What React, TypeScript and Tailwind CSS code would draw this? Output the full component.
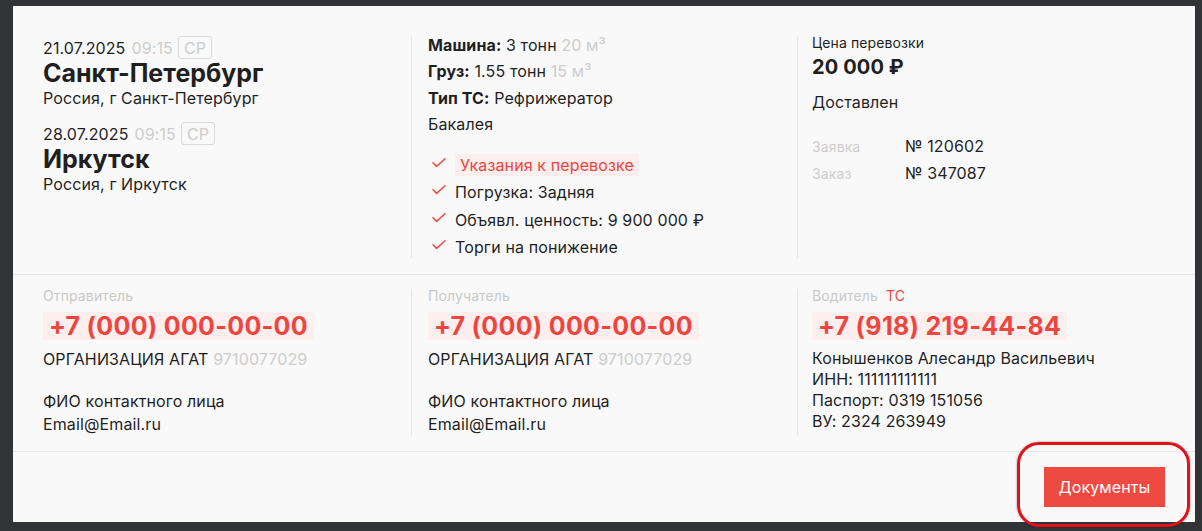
import React from "react";

const Check = () => (
    <svg width="14" height="10" viewBox="0 0 14 10" fill="none">
        <polyline points="1,4.8 4.6,8.4 13,0.8" stroke="#ef4a42" strokeWidth="1.5" strokeLinecap="round" strokeLinejoin="round" />
    </svg>
);

const DateRow = ({ date }: { date: string }) => (
    <div className="flex items-center h-[23px] text-[16px] leading-5">
        <span className="text-[#1f1f1f]">{date}</span>
        <span className="ml-[6px] text-[#cdcdcd]">09:15</span>
        <span className="ml-[5px] h-[23px] px-[5px] flex items-center border border-[#dadada] rounded-[3px] text-[#cdcdcd]">СР</span>
    </div>
);

const Phone = ({ value }: { value: string }) => (
    <div className="self-start mt-[9px] h-[28px] px-[6px] bg-[#fdefed] text-[#ee4540] text-[25px] leading-[28px] font-bold tracking-[0.3px]">
        {value}
    </div>
);

const checks = [
    { text: "Указания к перевозке", accent: true },
    { text: "Погрузка: Задняя" },
    { text: "Объявл. ценность: 9 900 000 ₽" },
    { text: "Торги на понижение" },
];

export default function App() {
    return (
        <div className="relative h-[531px] w-full bg-[#323336] pt-[6px] pl-[13px] font-['Inter','Noto_Sans',sans-serif] text-[#1f1f1f] tracking-[0.12px]">
            <div className="w-[1182px] h-[516px] bg-[#f9f9f9] flex flex-col">
                {/* верх */}
                <div className="flex pl-[30px] pt-[30px] pb-[16px] border-b border-[#e7e7e7]">
                    <div className="w-[368px] flex flex-col">
                        <DateRow date="21.07.2025" />
                        <div className="text-[25px] leading-[28px] font-bold tracking-normal">Санкт-Петербург</div>
                        <div className="text-[16px] leading-[22px]">Россия, г Санкт-Петербург</div>
                        <div className="mt-[13px]">
                            <DateRow date="28.07.2025" />
                        </div>
                        <div className="text-[25px] leading-[28px] font-bold tracking-normal">Иркутск</div>
                        <div className="text-[16px] leading-[22px]">Россия, г Иркутск</div>
                    </div>

                    <div className="w-[386px] border-l border-[#e7e7e7] pl-4 flex flex-col text-[16px]">
                        <div className="-mt-[1px] flex flex-col gap-[6.3px] leading-5">
                            <div><b className="font-bold">Машина:</b> 3 тонн <span className="text-[#cdcdcd]">20 м³</span></div>
                            <div><b className="font-bold">Груз:</b> 1.55 тонн <span className="text-[#cdcdcd]">15 м³</span></div>
                            <div><b className="font-bold">Тип ТС:</b> Рефрижератор</div>
                            <div>Бакалея</div>
                        </div>
                        <div className="mt-[20px] flex flex-col gap-[5.5px]">
                            {checks.map((c) => (
                                <div key={c.text} className="flex items-start h-[22px]">
                                    <div className="w-[27px] pl-[4px] pt-[4px]">
                                        <Check />
                                    </div>
                                    {c.accent ? (
                                        <span className="h-[22px] px-[5px] leading-[22px] bg-[#fdefed] text-[#ee4540]">{c.text}</span>
                                    ) : (
                                        <span className="leading-[22px]">{c.text}</span>
                                    )}
                                </div>
                            ))}
                        </div>
                    </div>

                    <div className="w-[368px] border-l border-[#e7e7e7] pl-[14px] flex flex-col">
                        <div className="text-[14px] leading-[14px]">Цена перевозки</div>
                        <div className="mt-[3px] text-[20px] leading-[28px] font-bold">20 000 ₽</div>
                        <div className="mt-[11px] text-[16px] leading-5">Доставлен</div>
                        <div className="mt-[24px] flex flex-col gap-[5.5px]">
                            <div className="flex items-baseline leading-5">
                                <span className="w-[93px] text-[14px] text-[#cdcdcd]">Заявка</span>
                                <span className="text-[16px]">№ 120602</span>
                            </div>
                            <div className="flex items-baseline leading-5">
                                <span className="w-[93px] text-[14px] text-[#cdcdcd]">Заказ</span>
                                <span className="text-[16px]">№ 347087</span>
                            </div>
                        </div>
                    </div>
                </div>

                {/* контакты */}
                <div className="flex pl-[30px] pt-[14px] pb-[15px] border-b border-[#e7e7e7] text-[16px]">
                    <div className="w-[368px] flex flex-col">
                        <div className="text-[14px] leading-[14px] text-[#c9c9c9]">Отправитель</div>
                        <Phone value="+7 (000) 000-00-00" />
                        <div className="mt-[9px] leading-5">ОРГАНИЗАЦИЯ АГАТ <span className="text-[#cdcdcd]">9710077029</span></div>
                        <div className="mt-[21px] leading-[23px]">ФИО контактного лица</div>
                        <div className="leading-[23px]">Email@Email.ru</div>
                    </div>

                    <div className="w-[386px] border-l border-[#e7e7e7] pl-4 flex flex-col">
                        <div className="text-[14px] leading-[14px] text-[#c9c9c9]">Получатель</div>
                        <Phone value="+7 (000) 000-00-00" />
                        <div className="mt-[9px] leading-5">ОРГАНИЗАЦИЯ АГАТ <span className="text-[#cdcdcd]">9710077029</span></div>
                        <div className="mt-[21px] leading-[23px]">ФИО контактного лица</div>
                        <div className="leading-[23px]">Email@Email.ru</div>
                    </div>

                    <div className="w-[368px] border-l border-[#e7e7e7] pl-[14px] flex flex-col">
                        <div className="text-[14px] leading-[14px]">
                            <span className="text-[#c9c9c9]">Водитель</span>
                            <span className="ml-[8px] text-[#ee4540]">ТС</span>
                        </div>
                        <Phone value="+7 (918) 219-44-84" />
                        <div className="mt-[8px] leading-[21px]">
                            <div>Конышенков Алесандр Васильевич</div>
                            <div>ИНН: 111111111111</div>
                            <div>Паспорт: 0319 151056</div>
                            <div>ВУ: 2324 263949</div>
                        </div>
                    </div>
                </div>

                {/* низ */}
                <div className="flex-1 flex justify-end items-start pt-[15px] pr-[30px]">
                    <button className="h-10 w-[121px] bg-[#ef4a42] text-white text-[16px]">Документы</button>
                </div>
            </div>

            <div className="absolute left-[1017px] top-[442px] w-[173px] h-[85px] rounded-[22px] border-[3px] border-[#e3101a] shadow-[0_0_2px_rgba(0,0,0,0.5)]" />
        </div>
    );
}
